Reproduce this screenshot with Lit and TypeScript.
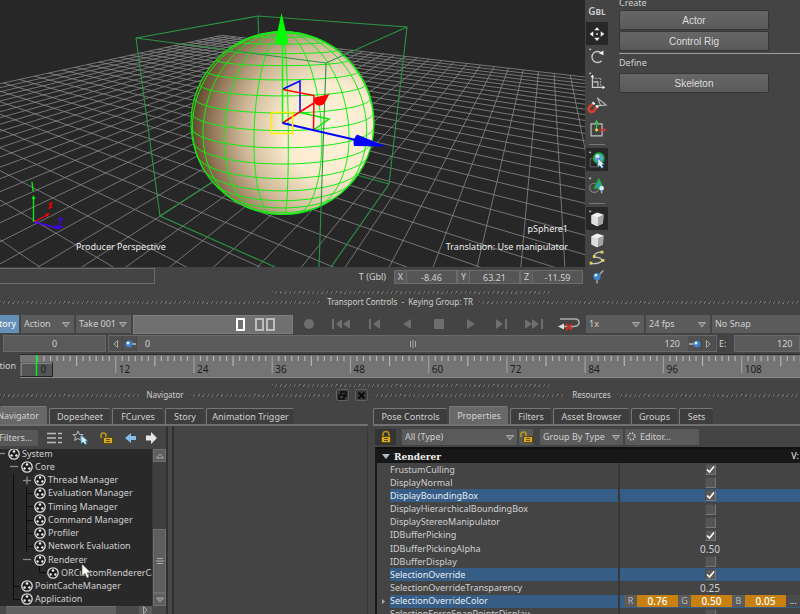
import { LitElement, html, svg, css } from "lit";
import { customElement, property } from "lit/decorators.js";

type Pt = [number, number];

/* ---------- 3D scene geometry ---------- */

// Ground plane given by a near point and two vanishing points.
const ORIGIN = [160, 216, 1];
const VP_A = [548, -36, 1];
const VP_B = [-400, -36, 1];

function ground(p: number, q: number): Pt {
  const w = ORIGIN[2] + p + q;
  return [
    (ORIGIN[0] + p * VP_A[0] + q * VP_B[0]) / w,
    (ORIGIN[1] + p * VP_A[1] + q * VP_B[1]) / w,
  ];
}

function gridPath(): string {
  const farP = 1.727, farQ = 0.808, stepP = 0.0644, stepQ = 0.0385, minW = 0.6;
  const seg = (a: Pt, b: Pt) =>
    `M${a[0].toFixed(1)} ${a[1].toFixed(1)}L${b[0].toFixed(1)} ${b[1].toFixed(1)}`;
  let d = "";
  for (let i = 0; i < 46; i++) {
    const p = farP - i * stepP;
    d += seg(ground(p, farQ), ground(p, minW - 1 - p));
  }
  for (let j = 0; j < 56; j++) {
    const q = farQ - j * stepQ;
    d += seg(ground(farP, q), ground(minW - 1 - q, q));
  }
  return d;
}

const CX = 282.5, CY = 123, FOCAL = 448, DIST = 5;
const TILT = (12.9 * Math.PI) / 180;
const SPIN = (3 * Math.PI) / 180;

function spherePoint(lat: number, lon: number): Pt | null {
  const x = Math.cos(lat) * Math.sin(lon + SPIN);
  const y0 = Math.sin(lat);
  const z0 = Math.cos(lat) * Math.cos(lon + SPIN);
  const y = y0 * Math.cos(TILT) - z0 * Math.sin(TILT);
  const z = y0 * Math.sin(TILT) + z0 * Math.cos(TILT);
  if (z * DIST < 1) return null;
  return [CX + (FOCAL * x) / (DIST - z), CY - (FOCAL * y) / (DIST - z)];
}

function trace(points: (Pt | null)[]): string {
  let d = "", pen = false;
  for (const pt of points) {
    if (!pt) { pen = false; continue; }
    d += `${pen ? "L" : "M"}${pt[0].toFixed(1)} ${pt[1].toFixed(1)}`;
    pen = true;
  }
  return d;
}

function wirePath(): string {
  const rad = Math.PI / 180;
  let d = "";
  for (let n = -9; n <= 9; n++) {
    const pts: (Pt | null)[] = [];
    for (let a = 0; a <= 360; a += 4) pts.push(spherePoint(n * 9 * rad, a * rad));
    d += trace(pts);
  }
  for (let m = 0; m < 20; m++) {
    const pts: (Pt | null)[] = [];
    for (let a = -90; a <= 90; a += 3) pts.push(spherePoint(a * rad, m * 18 * rad));
    d += trace(pts);
  }
  return d;
}

const GRID = gridPath();
const WIRE = wirePath();

/* ---------- shared styles ---------- */

const base = css`
  * { box-sizing: border-box; }
  button, input, select {
    font: inherit; color: inherit; border: 0; padding: 0; margin: 0;
    background: none; border-radius: 0; min-width: 0;
  }
  svg { display: block; }
`;

/* ---------- viewport ---------- */

@customElement("scene-view")
export class SceneView extends LitElement {
  static styles = [base, css`
    :host { display: block; position: relative; background: #272727; color: #eee; }
    .scene { width: 100%; height: auto; }
    .label { position: absolute; white-space: nowrap; line-height: 18px; }
    .camera { left: 13%; bottom: 11px; }
    .info { right: 17px; bottom: 11px; text-align: right; }
    p { margin: 0; }
  `];
  render() {
    return html`
      <svg class="scene" viewBox="0 0 585 267" fill="none">
        <defs>
          <radialGradient id="skin" cx="76%" cy="54%" r="80%">
            <stop offset="0" stop-color="#fff1da" />
            <stop offset=".32" stop-color="#fbebd0" />
            <stop offset=".6" stop-color="#cdb796" />
            <stop offset=".8" stop-color="#94795a" />
            <stop offset="1" stop-color="#4a3518" />
          </radialGradient>
        </defs>
        <path d=${GRID} stroke="#8c8c8c" stroke-width=".9" opacity=".85" />
        <g stroke="#2b9444" stroke-width="1.1">
          <path d="M136 38 258 16 407 27 389 184 331 267M136 38 160 216 275 267M258 16 263 149M160 216 263 149 389 184" />
        </g>
        <circle cx="282.5" cy="123" r="91.5" fill="url(#skin)" stroke="#12e012" stroke-width="1.2" />
        <path d=${WIRE} stroke="#12ee12" stroke-width="1" />
        <path d="M136 38 326 63 407 27M326 63 319 267" stroke="#2b9444" stroke-width="1.1" />
        <g stroke-width="1.5">
          <path d="M300 112.5 329 119 314 129.5" stroke="#00e800" />
          <path d="M282.5 123V44" stroke="#00ff00" />
          <path d="M283 89 300 81V112" stroke="#0000ff" />
          <path d="M283 89.5 314 95.5 313.5 129M282.5 123 314 103" stroke="#ff0000" />
          <path d="M282.5 123 356 140" stroke="#0000ff" stroke-width="1.8" />
        </g>
        <path d="M271.5 112.5H292.5V133.5H271.5Z" stroke="#ffee00" stroke-width="1.6" />
        <path d="M281.5 13 288.5 43Q282 47 275 43Z" fill="#00ff00" />
        <path d="M329.5 94 324 104Q318 108 314 102.5 313 97 317 97Z" fill="#ff0000" />
        <path d="M386 146.5 354 146Q352 140 357 134.5Z" fill="#0000ff" />
        <path d="M33.5 222V197M32 182 33 191" stroke="#00f000" stroke-width="1.4" />
        <path d="M31.5 199 33.5 195 35.5 199Z" fill="#00f000" />
        <path d="M34 222 47 215M52 202 49 209M49 203 52 208" stroke="#ff0000" stroke-width="1.3" />
        <path d="M45 214 50 213 47 217Z" fill="#f00" />
        <path d="M34 222 58 228M58 219 62 219 58 227 63 227" stroke="#4400ff" stroke-width="1.3" />
        <path d="M56 225 60 229 55 229Z" fill="#40f" />
      </svg>
      <p class="label camera">Producer Perspective</p>
      <div class="label info"><p>pSphere1</p><p>Translation: Use manipulator</p></div>
    `;
  }
}

/* ---------- tool column ---------- */

const dot = svg`<path d="M3 2h3l-1.5 2z" fill="#ddd" />`;

const cube = svg`
  <path d="M6 7 12 4 19 6 18.5 16 12 19 6 16Z" fill="#f4f4f4" />
  <path d="M13 9 19 6 18.5 16 12.5 19Z" fill="#a4a4a4" />
  <path d="M6 7 13 9 12.5 19 6 16Z" fill="#dedede" />`;

const tools = [
  { label: "Move", h: 23, on: true, art: svg`
    <g fill="#eee"><path d="M12 3.5 15 7H9Z" /><path d="M12 18.5 15 15H9Z" /><path d="M4 11 8 8V14Z" /><path d="M20 11 16 8V14Z" /></g>
    <path d="M11 10h2v2h-2z" fill="#bbb" />` },
  { label: "Rotate", h: 24, on: false, art: svg`${dot}
    <path d="M17 7A6 6 0 1 0 17 15" fill="none" stroke="#c8c8c8" stroke-width="1.5" /><path d="M14 7 19 4V9Z" fill="#eee" />` },
  { label: "Scale", h: 24, on: false, art: svg`${dot}
    <path d="M7 6V18H19" fill="none" stroke="#ccc" stroke-width="1.3" /><path d="M7 8h9v9" fill="none" stroke="#bbb" stroke-dasharray="2 1" />
    <path d="M8 12h5v5" fill="none" stroke="#ccc" stroke-width="1.2" /><path d="M7 4 9 7H5ZM21 18 18 20V16Z" fill="#eee" />` },
  { label: "Snap", h: 23, on: false, art: svg`
    <path d="M12 3 22 11 11 12M13 4 16 12" fill="none" stroke="#bbb" stroke-width="1.2" />
    <path d="M8 9 4 13Q1.5 16 4 18 6.500 19.500 9 17L12 13" fill="none" stroke="#d8402c" stroke-width="2.8" />
    <path d="M7 8l2.5 2.200M10.800 11.500l2.500 2.200" stroke="#eee" stroke-width="2.4" />` },
  { label: "Pivot", h: 25, on: false, art: svg`
    <path d="M5.5 5.5H17.5V18.5H5.5Z" fill="none" stroke="#c0c0c0" stroke-width="1.3" />
    <path d="M11.5 12V3" stroke="#3bc43b" stroke-width="1.4" /><path d="M11.5 1 14 5H9Z" fill="#3bc43b" />
    <path d="M12 12H20" stroke="#c62a2a" stroke-width="1.4" /><path d="M22.5 12 19 9.5V14.5Z" fill="#d83030" />
    <circle cx="11.5" cy="12" r="1.6" fill="#e8d94a" />` },
  null,
  { label: "Select object", h: 23, on: true, art: svg`${dot}
    <path d="M4.5 9.500H12.500V18.500H4.500Z" fill="none" stroke="#666" />
    <circle cx="14" cy="9" r="5.5" fill="#5f9fdc" stroke="#17b23a" stroke-width="1.8" /><circle cx="12.5" cy="7" r="2.2" fill="#cfe6fa" />
    <path d="M13 9V19L15 17 17 20 19 19 17.5 16H20Z" fill="#e8f4fc" stroke="#1b6f9c" stroke-width=".7" />` },
  { label: "Select component", h: 29, on: false, art: svg`${dot}
    <circle cx="9" cy="13" r="5" fill="none" stroke="#808080" stroke-width="1.3" />
    <path d="M14 4 18.5 13H9.5Z" fill="#4c86d8" stroke="#16b83a" stroke-width="1.8" />
    <circle cx="17" cy="13.5" r="2.5" fill="#dff2fb" /><path d="M17 15v4" stroke="#8cc4e4" stroke-width="1.5" />` },
  null,
  { label: "Shaded", h: 23, on: true, art: svg`${dot}${cube}` },
  { label: "Model", h: 19, on: false, art: cube },
  { label: "Path", h: 18, on: false, art: svg`
    <path d="M5 17Q14 18 17.5 14 17 10 9 10 8 5 18 4" fill="none" stroke="#c4c4c4" stroke-width="1.4" />
    <path d="M4 15h3v3H4zM17 12h3v3h-3zM7.500 8h3v3h-3zM16 3h3v3h-3z" fill="#e6d84e" />` },
  { label: "Marker", h: 19, on: false, art: svg`
    <path d="M14 9 19 4M12 13V18" stroke="#aaa" stroke-width="1.6" /><circle cx="12" cy="10.5" r="4" fill="#3c86c8" /><circle cx="10.8" cy="9" r="1.5" fill="#d6ecfb" />` },
];

@customElement("tool-column")
export class ToolColumn extends LitElement {
  static styles = [base, css`
    :host { display: flex; flex-direction: column; align-items: center; color: #ccc; }
    .global { height: 22px; font-weight: 600; font-size: 10px; font-variant: small-caps; line-height: 22px; }
    .tool { display: flex; align-items: center; justify-content: center; width: 22px; }
    .on { background: #272727; }
    hr { width: 16px; border: 0; border-top: 1px solid #777; margin: 3px 0; }
  `];
  render() {
    return html`<button class="global">Gbl</button>
      ${tools.map((t) => t
        ? html`<button class="tool ${t.on ? "on" : ""}" aria-label=${t.label} style="height:${t.h}px">
            <svg width="24" height="22" viewBox="0 0 24 22">${t.art}</svg></button>`
        : html`<hr />`)}`;
  }
}

/* ---------- transport and timeline ---------- */

const pin = svg`<circle cx="5" cy="6" r="3.5" fill="#3b7fc4" /><circle cx="4" cy="5" r="1.5" fill="#e4f2ff" />`;

const transport = [
  { label: "Record", w: 28, art: svg`<circle cx="10" cy="7" r="5" />` },
  { label: "Go to start", w: 36, art: svg`<path d="M1 2h2v10H1zM11 2v10L5 7zM19 2v10L12 7z" />` },
  { label: "Previous key", w: 32, art: svg`<path d="M4 2h2v10H4zM15 2v10L8 7z" />` },
  { label: "Play backward", w: 32, art: svg`<path d="M14 2v10L6 7z" />` },
  { label: "Stop", w: 31, art: svg`<path d="M5 2h10v10H5z" />` },
  { label: "Play", w: 32, art: svg`<path d="M7 2v10l8-5z" />` },
  { label: "Next key", w: 32, art: svg`<path d="M4 2v10l7-5zM13 2h2v10h-2z" />` },
  { label: "Go to end", w: 32, art: svg`<path d="M1 2v10l7-5zM8 2v10l7-5zM17 2h2v10h-2z" />` },
];

const arrow = html`<svg class="arrow" width="8" height="6" viewBox="0 0 8 6"><path d="M.5 .5h7L4 5Z" fill="#777" stroke="#aaa" /></svg>`;

@customElement("transport-bar")
export class TransportBar extends LitElement {
  static styles = [base, css`
    :host { display: block; }
    .controls { display: flex; align-items: center; gap: 2px; height: 20px; margin-bottom: 1px; }
    .story { width: 19px; height: 18px; background: #648fb9; color: #fff; display: flex; justify-content: flex-end;
      align-items: center; overflow: hidden; padding-right: 3px; }
    .pick { position: relative; height: 18px; background: #5b5b5b; }
    .pick select { appearance: none; width: 100%; height: 18px; padding-left: 3px; }
    .pick .arrow { position: absolute; right: 4px; top: 7px; pointer-events: none; }
    .act { width: 53px; }
    .take { width: 55px; }
    .speed { width: 58px; }
    .fps { width: 64px; }
    .snap { width: 88px; }
    .marks { width: 160px; height: 19px; background: #707070; border: 1px solid #7e7e7e; display: flex; justify-content: flex-end; align-items: center; gap: 2px; padding-right: 17px; }
    .mark { width: 9px; height: 13px; border: 2px solid #bdbdbd; }
    .mark:first-child { border-color: #fff; margin-right: 8px; }
    .play { flex: none; display: flex; justify-content: center; fill: #6e6e6e; }
    .deck { flex: 1; display: flex; align-items: center; }
    .loop { margin-left: 7px; }
    .range { display: flex; align-items: stretch; height: 17px; margin-bottom: 1px; gap: 2px; }
    .range label { width: 13px; display: flex; align-items: center; }
    .cell { background: #5a5a5a; border: 1px solid #696969; }
    .start { width: 103px; margin-left: 3px; text-align: center; }
    .span { flex: 1; display: flex; align-items: center; }
    .span span { flex: 1; padding: 0 8px; }
    .span span:last-of-type { text-align: right; }
    .span button { height: 15px; width: 14px; display: flex; align-items: center; justify-content: center; background: #505050; border-right: 1px solid #484848; }
    .end { width: 66px; padding-left: 42px; }
    .time { display: flex; align-items: center; height: 25px; }
    .mode { width: 20px; display: flex; justify-content: flex-end; padding-right: 4px; overflow: hidden; flex: none; }
    .ruler { flex: 1; min-width: 0; height: 24px; background: #747474; border-top: 1px solid #2a2a2a; border-bottom: 1px solid #8a8a8a; overflow: hidden; }
    .ruler text { fill: #1d1d1d; font-size: 10px; }
  `];
  private ruler() {
    const at = (f: number) => 17.5 + f * 6.52;
    const frames = Array.from({ length: 118 }, (_, i) => i);
    return svg`
      ${frames.map((f) => {
        const len = f % 12 === 0 ? 17 : f % 6 === 0 ? 10 : 5;
        return svg`<path d="M${at(f)} 1v${len}" stroke=${f % 12 ? "#b4b4b4" : "#a0a0a0"} stroke-width="1.2" />`;
      })}
      <path d="M.5 7.5H32.5V21.5H.5Z" fill="#555" stroke="#222" />
      <path d="M1 21V8H32" fill="none" stroke="#aaa" />
      <path d="M16.5 0V21" stroke="#00f020" stroke-width="1.5" />
      ${frames.filter((f) => f % 12 === 0).map((f) => svg`<text x=${at(f) + 3} y="18">${f}</text>`)}`;
  }
  render() {
    return html`
      <div class="controls">
        <button class="story">Story</button>
        <div class="pick act"><select aria-label="Action"><option>Action</option></select>${arrow}</div>
        <div class="pick take"><select aria-label="Take"><option>Take 001</option></select>${arrow}</div>
        <div class="marks"><i class="mark"></i><i class="mark"></i><i class="mark"></i></div>
        <div class="deck">
          ${transport.map((t) => html`<button class="play" aria-label=${t.label} style="width:${t.w}px">
            <svg width="20" height="14" viewBox="0 0 20 14">${t.art}</svg></button>`)}
          <button class="loop" aria-label="Loop"><svg width="24" height="16" viewBox="0 0 24 16">
            <path d="M3 3H18Q22 3 22 6.5 22 10 17 10.5H4" fill="none" stroke="#aaa" stroke-width="1.6" />
            <path d="M1 10.5 7 7.5V13.5Z" fill="#ddd" /><path d="M9 8 15 14M15 8 9 14" stroke="#d42a20" stroke-width="1.8" /></svg></button>
        </div>
        <div class="pick speed"><select aria-label="Speed"><option>1x</option></select>${arrow}</div>
        <div class="pick fps"><select aria-label="Rate"><option>24 fps</option></select>${arrow}</div>
        <div class="pick snap"><select aria-label="Snap"><option>No Snap</option></select></div>
      </div>
      <div class="range">
        <input class="cell start" aria-label="Start" value="0" />
        <div class="cell span">
          <button aria-label="Back"><svg width="5" height="8"><path d="M4.5 .5V7.5L1 4Z" fill="none" stroke="#aaa" /></svg></button>
          <button aria-label="Zoom start"><svg width="12" height="12"><path d="M7 6h5" stroke="#bbb" stroke-width="1.5" />${pin}</svg></button>
          <span>0</span>
          <svg width="8" height="8"><path d="M1.5 1v6M4 0v8M6.5 1v6" stroke="#a8a8a8" /></svg>
          <span>120</span>
          <button aria-label="Zoom end"><svg width="12" height="12"><path d="M0 6h5" stroke="#bbb" stroke-width="1.5" /><g transform="translate(3 0)">${pin}</g></svg></button>
          <button aria-label="Forward"><svg width="5" height="8"><path d="M.5 .5V7.5L4 4Z" fill="none" stroke="#aaa" /></svg></button>
        </div>
        <label for="end">E:</label>
        <input id="end" class="cell end" value="120" />
      </div>
      <div class="time"><span class="mode">Action</span><svg class="ruler">${this.ruler()}</svg></div>
    `;
  }
}

/* ---------- icons used by both lower panels ---------- */

const lock = (open: boolean) => html`<svg width="14" height="14" viewBox="0 0 14 14">
  <path d=${open ? "M2 7V4.500Q2 2 4.500 2 7 2 7 4.500V7" : "M4 7V4.500Q4 1.500 7 1.500 10 1.500 10 4.500V7"} fill="none" stroke="#b8941c" stroke-width="1.6" />
  <path d=${open ? "M4.500 6.500h9v6h-9z" : "M2.500 6.500h9v6h-9z"} fill="#d6ae22" stroke="#5e4808" /><path d="M${open ? 7 : 5} 8.5h4M${open ? 7 : 5} 10.5h4" stroke="#5e4808" /></svg>`;

@customElement("title-strip")
export class TitleStrip extends LitElement {
  @property() label = "";
  static styles = [base, css`
    :host { display: flex; align-items: center; gap: 6px; font-size: 8px; height: 14px; }
    .name { white-space: pre; }
    .grip { flex: 1; height: 3px; background: repeating-linear-gradient(120deg, #707070 0 1px, #3c3c3c 1px 2px, #444 2px 4px); }
  `];
  render() {
    return html`<i class="grip"></i><span class="name">${this.label}</span><i class="grip"></i><slot></slot>`;
  }
}

@customElement("tab-strip")
export class TabStrip extends LitElement {
  @property({ attribute: false }) tabs: [string, number][] = [];
  @property() active = "";
  static styles = [base, css`
    :host { display: flex; align-items: flex-end; gap: 2px; height: 20px; flex: none; border-bottom: 2px solid #707070; }
    .tab { height: 16px; background: #3d3d3d; border-top: 1px solid #777; border-left: 1px solid #777; border-radius: 2px 2px 0 0; white-space: nowrap;
      display: flex; align-items: center; justify-content: center; }
    .on { height: 18px; background: #686868; }
    .cut { justify-content: flex-end; padding-right: 8px; border-left: 0; }
  `];
  render() {
    return this.tabs.map(([name, w]) => html`<button style="width:${w}px"
      class="tab ${name === this.active ? "on" : ""} ${name === "Navigator" ? "cut" : ""}">${name}</button>`);
  }
}

/* ---------- navigator ---------- */

const tree: [string, number, string][] = [
  ["System", 0, "-"], ["Core", 1, "-"], ["Thread Manager", 2, "+"], ["Evaluation Manager", 2, ""],
  ["Timing Manager", 2, ""], ["Command Manager", 2, ""], ["Profiler", 2, ""], ["Network Evaluation", 2, ""],
  ["Renderer", 2, "-"], ["ORCustomRendererCallback", 3, ""], ["PointCacheManager", 1, ""], ["Application", 1, ""],
];

@customElement("navigator-panel")
export class NavigatorPanel extends LitElement {
  static styles = [base, css`
    :host { display: flex; flex-direction: column; min-width: 0; }
    title-strip { margin-bottom: 4px; }
    .box { width: 13px; height: 12px; display: flex; align-items: center; justify-content: center; border: 1px solid #606060; border-radius: 2px; background: #3c3c3c; }
    .body { flex: 1; display: flex; min-height: 0; }
    .left { width: 166px; flex: none; display: flex; flex-direction: column; }
    .tools { height: 23px; display: flex; align-items: center; flex: none; }
    .tools button { display: flex; }
    .filters { width: 38px; height: 16px; background: #575757; justify-content: flex-end; align-items: center; overflow: hidden; padding-right: 6px; }
    .list { margin-left: 9px; }
    .star { margin-left: 10px; }
    .lock { margin-left: 10px; }
    .back { margin-left: 12px; }
    .fwd { margin-left: 8px; }
    .area { flex: 1; display: flex; background: #292929; min-height: 0; overflow: hidden; }
    .tree { position: relative; flex: 1; min-width: 0; margin: -2px 0 0; padding: 0; list-style: none; display: flex; flex-direction: column; overflow: hidden; }
    .node { flex: 1; display: flex; align-items: center; gap: 2px; white-space: nowrap; min-height: 0; margin-left: -4px; }
    .node svg { flex: none; }
    .bar { width: 14px; background: #3f3f3f; display: flex; flex-direction: column; border-left: 1px solid #383838; }
    .bar button { height: 13px; background: #5e5e5e; border: 1px solid #707070; display: flex; align-items: center; justify-content: center; flex: none; }
    .bar .room { flex: 1; }
    .bar .thumb { height: 64px; }
    .scroll { height: 8px; flex: none; display: flex; background: #4a4a4a; padding-right: 14px; overflow: hidden; }
    .scroll .thumb { width: 110px; margin-left: 6px; background: #606060; border-top: 1px solid #707070; }
    .scroll .next { margin-left: auto; width: 13px; background: #5c5c5c; display: flex; align-items: center; justify-content: center; }
    .split { width: 8px; border-left: 2px solid #303030; border-right: 2px solid #303030; background: #484848; flex: none; }
    .blank { flex: 1; background: #444; border-right: 1px solid #3a3a3a; }
    .lines, .cursor { position: absolute; left: 0; top: 0; pointer-events: none; }
    .cursor { left: 81px; top: 116px; }
  `];
  render() {
    return html`
      <title-strip label="Navigator">
        <button class="box" aria-label="Float"><svg width="9" height="9" fill="none" stroke="#0a0a0a" stroke-width="1.5"><path d="M3 3V1H8V5H6M1 4H6V8H1Z" /></svg></button>
        <button class="box" aria-label="Close"><svg width="9" height="9" stroke="#0a0a0a" stroke-width="2"><path d="M1.5 1.5 7.5 7.5M7.5 1.5 1.5 7.5" /></svg></button>
      </title-strip>
      <tab-strip active="Navigator" .tabs=${[["Navigator", 47], ["Dopesheet", 61], ["FCurves", 51], ["Story", 39], ["Animation Trigger", 88]]}></tab-strip>
      <div class="body">
        <div class="left">
          <div class="tools">
            <button class="filters">Filters...</button>
            <button class="list" aria-label="List"><svg width="15" height="12" stroke="#bbb" stroke-width="1.3"><path d="M0 1.5h9M11 1.5h4M0 6h9M11 6h4M0 10.5h9M11 10.5h4" /></svg></button>
            <button class="star" aria-label="Pick"><svg width="17" height="15"><path d="M6 1 7.5 4.5H11L8.5 7 9.5 10.5 6 8.5 2.5 10.5 3.5 7 1 4.5H4.5Z" fill="none" stroke="#bbb" /><path d="M9 5V14L11 12 13 14.5 15 13.5 13.5 11H16Z" fill="#d8eef8" stroke="#2a7aa2" stroke-width=".8" /></svg></button>
            <button class="lock" aria-label="Lock">${lock(true)}</button>
            <button class="back" aria-label="Back"><svg width="12" height="12"><path d="M0 6 6 1V4H11V8H6V11Z" fill="#86bdea" /></svg></button>
            <button class="fwd" aria-label="Forward"><svg width="12" height="12"><path d="M12 6 6 0V3.5H1V8.5H6V12Z" fill="#e6e6e6" /></svg></button>
          </div>
          <div class="area">
            <ul class="tree">
              <svg class="lines" width="60" height="160" stroke="#0c0c0c" fill="none">
                <path d="M13.5 27V152.5M13.5 139.5H20M13.5 152.5H20M26.5 40V105M26.5 46.5H33M26.5 59.5H33M26.5 73.5H33M26.5 86.5H33M26.5 99.5H33M39.5 119V125.5H46" />
              </svg>
              ${tree.map(([name, depth, mark]) => html`<li class="node" style="padding-left:${depth * 13}px">
                <svg width="10" height="9" stroke="#8c8c8c" stroke-width="1.3">${mark ? svg`<path d="M1 4.5H9" />` : ""}${mark === "+" ? svg`<path d="M5 .5V8.5" />` : ""}</svg>
                <svg width="12" height="12" viewBox="0 0 12 12"><circle cx="6" cy="6" r="5.2" fill="#1c1c1c" stroke="#ddd" stroke-width="1.3" />
                  <circle cx="6" cy="3.5" r="1.3" fill="#eee" /><circle cx="3.6" cy="7.5" r="1.2" fill="#eee" /><circle cx="8.4" cy="7.5" r="1.2" fill="#eee" /></svg>
                <span>${name}</span></li>`)}
              <svg class="cursor" width="12" height="16"><path d="M1 1V13L4 10.5 6 15 8 14 6.2 9.8H10Z" fill="#fff" stroke="#555" stroke-width=".6" /></svg>
            </ul>
            <div class="bar">
              <button aria-label="Up"><svg width="8" height="6"><path d="M.5 5h7L4 1Z" fill="none" stroke="#aaa" /></svg></button>
              <span class="room"></span>
              <button class="thumb" aria-label="Scroll"><svg width="8" height="8"><path d="M1 1.5h6M0 4h8M1 6.5h6" stroke="#a8a8a8" /></svg></button>
              <button aria-label="Down"><svg width="8" height="6"><path d="M.5 1h7L4 5Z" fill="#777" stroke="#aaa" /></svg></button>
            </div>
          </div>
          <div class="scroll"><button class="thumb" aria-label="Scroll sideways"></button><button class="next" aria-label="Right"><svg width="5" height="8"><path d="M.5 .5V7.5L4 4Z" fill="none" stroke="#aaa" /></svg></button></div>
        </div>
        <div class="split"></div>
        <div class="blank"></div>
      </div>
    `;
  }
}

/* ---------- resources ---------- */

const props: { name: string; value: boolean | string | number[]; on?: boolean }[] = [
  { name: "FrustumCulling", value: true },
  { name: "DisplayNormal", value: false },
  { name: "DisplayBoundingBox", value: true, on: true },
  { name: "DisplayHierarchicalBoundingBox", value: false },
  { name: "DisplayStereoManipulator", value: false },
  { name: "IDBufferPicking", value: true },
  { name: "IDBufferPickingAlpha", value: "0.50" },
  { name: "IDBufferDisplay", value: false },
  { name: "SelectionOverride", value: true, on: true },
  { name: "SelectionOverrideTransparency", value: "0.25" },
  { name: "SelectionOverrideColor", value: [0.76, 0.5, 0.05], on: true },
  { name: "SelectionForceSnapPointsDisplay", value: false },
];

@customElement("resources-panel")
export class ResourcesPanel extends LitElement {
  static styles = [base, css`
    :host { display: flex; flex-direction: column; min-width: 0; overflow: hidden; }
    title-strip { margin: 0 -10px 4px 0; }
    .tools { height: 21px; display: flex; align-items: center; gap: 2px; padding-left: 2px; flex: none; }
    .tools > * { height: 16px; background: #5a5a5a; display: flex; align-items: center; }
    .tools .lock { width: 21px; justify-content: center; background: #343434; margin-right: 4px; }
    .pick { position: relative; }
    .pick select { appearance: none; width: 100%; height: 16px; padding-left: 3px; }
    .pick svg { position: absolute; right: 3px; top: 6px; pointer-events: none; }
    .type { width: 115px; }
    .group { width: 83px; margin-left: 5px; }
    .edit { width: 74px; gap: 4px; padding-left: 2px; }
    .sheet { flex: 1; min-height: 0; overflow: hidden; border-top: 2px solid #101010; border-left: 2px solid #181818; margin-left: 2px; }
    .head { height: 14px; background: #171717; display: flex; align-items: center; gap: 4px; padding: 0 1px 0 5px; color: #eee; }
    .head h2 { font: bold 10px "DejaVu Serif Condensed", "DejaVu Serif", serif; margin: 0; flex: 1; }
    table { width: 100%; height: 158px; border-collapse: collapse; table-layout: fixed; }
    td, th { padding: 0; font-weight: 400; text-align: left; line-height: 12px; height: 13px; vertical-align: middle; }
    .twist { width: 13px; }
    .name { border-right: 2px solid #383838; }
    .names { width: 229px; }
    .val { text-align: center; }
    .hit .name, .hit .val { background: #365d85; color: #e4ecf4; }
    .check { display: block; margin: 0 auto; appearance: none; width: 11px; height: 11px; background: #555; border: 1px solid #4a4a4a; border-right-color: #777; border-bottom-color: #777; }
    .check:checked { background: #5a5a5a url("data:image/svg+xml,%3Csvg xmlns='http://www.w3.org/2000/svg' viewBox='0 0 9 9'%3E%3Cpath d='M1 4.5 3.5 7 8 1.5' fill='none' stroke='white' stroke-width='1.6'/%3E%3C/svg%3E"); }
    .num { width: 60px; height: 12px; text-align: center; display: block; margin: 0 auto; font-size: 10px; }
    .rgb { display: flex; padding-left: 4px; }
    .rgb label { width: 13px; background: #5c5c5c; text-align: center; color: #bbb; }
    .rgb input { width: 41px; height: 12px; background: #c8810f; color: #fff; text-align: center; font-weight: 500; font-size: 10px; }
    .rgb button { flex: 1; background: #4c4c4c; height: 12px; }
  `];
  private cell(p: (typeof props)[number]) {
    if (typeof p.value === "boolean")
      return html`<input class="check" type="checkbox" aria-label=${p.name} .checked=${p.value} />`;
    if (typeof p.value === "string")
      return html`<input class="num" aria-label=${p.name} .value=${p.value} />`;
    return html`<div class="rgb">${p.value.map((v, i) => html`<label for="c${i}">${"RGB"[i]}</label><input id="c${i}" .value=${v.toFixed(2)} />`)}<button>...</button></div>`;
  }
  render() {
    return html`
      <title-strip label="Resources"></title-strip>
      <tab-strip active="Properties" .tabs=${[["Pose Controls", 74], ["Properties", 59], ["Filters", 41], ["Asset Browser", 76], ["Groups", 46], ["Sets", 34]]}></tab-strip>
      <div class="tools">
        <button class="lock" aria-label="Lock">${lock(false)}</button>
        <div class="pick type"><select aria-label="Type"><option>All (Type)</option></select>${arrow}</div>
        <button aria-label="Unlock">${lock(true)}</button>
        <div class="pick group"><select aria-label="Group"><option>Group By Type</option></select>${arrow}</div>
        <button class="edit"><svg width="9" height="9" viewBox="0 0 9 9"><circle cx="4.5" cy="4.5" r="3.3" fill="none" stroke="#ccc" stroke-width="1.8" stroke-dasharray="1.3 1.29" /></svg>Editor...</button>
      </div>
      <div class="sheet">
        <div class="head"><svg width="8" height="5"><path d="M0 0h8L4 5Z" fill="#bbb" /></svg><h2>Renderer</h2><span>V:</span></div>
        <table>
          <colgroup><col class="twist" /><col class="names" /><col /></colgroup>
          ${props.map((p) => html`<tr class=${p.on ? "hit" : ""}>
            <td>${Array.isArray(p.value) ? html`<svg width="13" height="7"><path d="M5 1v5l3-2.5z" fill="#aaa" /></svg>` : ""}</td>
            <th class="name" scope="row">${p.name}</th><td class="val">${this.cell(p)}</td></tr>`)}
        </table>
      </div>
    `;
  }
}

/* ---------- page ---------- */

@customElement("app-root")
export class AppRoot extends LitElement {
  static styles = [base, css`
    :host { display: flex; flex-direction: column; height: 100vh; overflow: hidden; background: #444; color: #d0d0d0;
      font: 9px/12px "Noto Sans", "Liberation Sans", sans-serif; }
    .top { display: grid; grid-template-columns: minmax(0, 1fr) 24px 191px; flex: none; }
    .status { display: flex; align-items: center; height: 20px; padding-right: 2px; }
    .command { width: 155px; height: 16px; border: 1px solid #6a6a6a; border-left: 0; margin: 1px auto 3px 0; }
    .status label { background: #5a5a5a; border: 1px solid #6c6c6c; width: 13px; height: 14px; text-align: center; }
    .status output { margin-right: 8px; }
    .status .value { width: 50px; height: 14px; background: #555; border: 1px solid #6c6c6c; border-left: 0; text-align: center; }
    .side { display: flex; flex-direction: column; padding-left: 10px; }
    .side button { width: 150px; height: 20px; background: linear-gradient(#666, #5a5a5a); border: 1px solid #353535; border-radius: 2px;
      font: 10px "Liberation Sans", sans-serif; color: #ddd; flex: none; }
    .create { margin-top: -4px; line-height: 14px; }
    .rig { margin-top: 1px; }
    .side hr { width: 100%; border: 0; border-top: 1px solid #a0a0a0; margin: 2px 0 3px; }
    .define { margin-bottom: 4px; }
    .rule { width: 35%; height: 3px; margin: 4px auto 1px 34%; flex: none; background: repeating-linear-gradient(120deg, #707070 0 1px, #3c3c3c 1px 2px, #444 2px 4px); }
    title-strip { margin-bottom: 5px; }
    .gap { margin: 6px auto 1px 34%; }
    .bottom { flex: 1; min-height: 0; display: grid; grid-template-columns: minmax(0, 368fr) minmax(0, 427fr); gap: 5px; }
  `];
  private axis(name: string, value: string) {
    return html`<label for=${name}>${name}</label><input class="value" id=${name} value=${value} />`;
  }
  render() {
    return html`
      <div class="top">
        <div>
          <scene-view></scene-view>
          <div class="status">
            <div class="command"></div>
            <output>T (Gbl)</output>
            ${this.axis("X", "-8.46")}${this.axis("Y", "63.21")}${this.axis("Z", "-11.59")}
          </div>
        </div>
        <tool-column></tool-column>
        <div class="side">
          <span class="create">Create</span>
          <button>Actor</button>
          <button class="rig">Control Rig</button>
          <hr />
          <span class="define">Define</span>
          <button>Skeleton</button>
        </div>
      </div>
      <i class="rule"></i>
      <title-strip label="Transport Controls  -  Keying Group: TR"></title-strip>
      <transport-bar></transport-bar>
      <i class="rule gap"></i>
      <div class="bottom"><navigator-panel></navigator-panel><resources-panel></resources-panel></div>
    `;
  }
}
